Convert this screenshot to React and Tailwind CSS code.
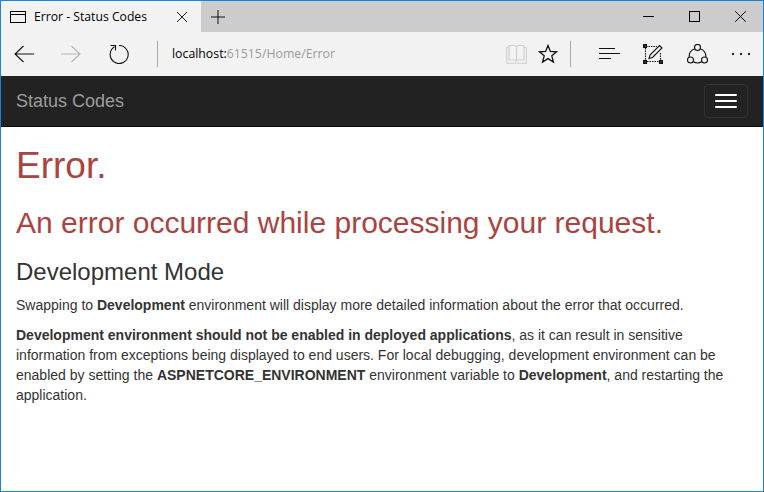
const ui = { fontFamily: '"Open Sans", "Noto Sans", sans-serif' };

function TitleBar() {
  return (
    <div className="flex h-[31px] bg-[#cccccc]">
      <div className="flex h-full w-[200px] items-center bg-[#f2f2f2] pl-[8px]">
        <svg width="18" height="14" viewBox="0 0 18 14" fill="none" stroke="#000" strokeWidth="1">
          <rect x="1.500" y="1.500" width="15" height="11" />
          <path d="M1.500 4.500h15" />
        </svg>
        <span className="mt-[2px] ml-[7px] w-[130px] text-[12.200px] whitespace-nowrap text-black" style={ui}>
          Error - Status Codes
        </span>
        <svg className="ml-[12px]" width="12" height="12" viewBox="0 0 12 12" fill="none" stroke="#222" strokeWidth="1">
          <path d="M1 1l10 10M11 1L1 11" />
        </svg>
      </div>
      <div className="flex w-[34px] items-center justify-center">
        <svg width="14" height="14" viewBox="0 0 14 14" fill="none" stroke="#111" strokeWidth="1">
          <path d="M7 0v14M0 7h14" />
        </svg>
      </div>
      <div className="flex-1" />
      <div className="flex h-full items-center">
        <div className="flex w-[46px] justify-center">
          <svg width="11" height="11" viewBox="0 0 11 11" stroke="#000"><path d="M0 5.500h11" /></svg>
        </div>
        <div className="flex w-[46px] justify-center">
          <svg width="11" height="11" viewBox="0 0 11 11" fill="none" stroke="#000"><rect x="0.500" y="0.500" width="10" height="10" /></svg>
        </div>
        <div className="flex w-[46px] justify-center">
          <svg width="11" height="11" viewBox="0 0 11 11" fill="none" stroke="#000"><path d="M0 0l11 11M11 0L0 11" /></svg>
        </div>
      </div>
    </div>
  );
}

function ToolBar() {
  return (
    <div className="flex h-[44px] items-center bg-[#f2f2f2]">
      <svg className="ml-[13px]" width="20" height="18" viewBox="0 0 20 18" fill="none" stroke="#111" strokeWidth="1.100">
        <path d="M20 9H1M9.500 1L1 9l8.500 8" />
      </svg>
      <svg className="ml-[27px]" width="20" height="18" viewBox="0 0 20 18" fill="none" stroke="#b4b4b4" strokeWidth="1.100">
        <path d="M0 9h19M10.500 1L19 9l-8.500 8" />
      </svg>
      <svg className="ml-[28px]" width="20" height="20" viewBox="0 0 20 20" fill="none" stroke="#111" strokeWidth="1.100">
        <path d="M5.500 2.800A9 9 0 1 0 10 1.500" />
        <path d="M1.500 1.500h5v5" />
      </svg>
      <div className="ml-[28px] h-[26px] w-px bg-[#a8a8a8]" />
      <div className="ml-[14px] text-[12.300px] whitespace-nowrap text-[#9a9a9a]" style={ui}>
        <span className="text-black">localhost:</span>61515/Home/Error
      </div>
      <div className="flex-1" />
      <svg width="21" height="20" viewBox="0 0 21 20" fill="none" stroke="#cfcfcf" strokeWidth="1.100">
        <path d="M3 1.500h5.500q2 0 2 2q0-2 2-2H18V16h-5.500q-2 0-2 1.500q0-1.500-2-1.500H3z" />
        <path d="M10.500 3.500v14M3 3.500H.700v15.800h19.600V3.500H18" />
      </svg>
      <svg className="ml-[11px]" width="20" height="20" viewBox="0 0 20 20" fill="none" stroke="#111" strokeWidth="1.300">
        <path d="M10 1.500l2.400 5.900 6.300.4-4.900 4 1.600 6.200L10 14.600 4.600 18l1.600-6.200-4.900-4 6.300-.4z" />
      </svg>
      <div className="ml-[12px] h-[26px] w-px bg-[#a8a8a8]" />
      <svg className="ml-[28px]" width="21" height="14" viewBox="0 0 21 14" stroke="#111" strokeWidth="1">
        <path d="M0 1.500h16M0 6.500h21M0 11.500h12" />
      </svg>
      <svg className="ml-[23px]" width="20" height="20" viewBox="0 0 20 20" fill="none" stroke="#111" strokeWidth="1.100">
        <path d="M3 2.500h11M2.500 4v12M17.500 9v7M4 17.500h12" strokeDasharray="1.500 1" />
        <rect x="0.500" y="0.500" width="3" height="3" fill="#333" />
        <rect x="0.500" y="16.500" width="3" height="3" fill="#333" />
        <rect x="16.500" y="16.500" width="3" height="3" fill="#333" />
        <path d="M6 14.500l1-3.500L16.500 1.500l2.500 2.500L9.500 13.500z" />
      </svg>
      <svg className="ml-[24px]" width="21" height="21" viewBox="0 0 21 21" fill="none" stroke="#111" strokeWidth="1.100">
        <circle cx="10.500" cy="3.500" r="3" />
        <circle cx="3.500" cy="16" r="3" />
        <circle cx="17.500" cy="16" r="3" />
        <path d="M7.700 4.800A8.500 8.500 0 0 0 2.100 13.300M13.300 4.800A8.500 8.500 0 0 1 18.900 13.300M6.300 17.800a8.500 8.500 0 0 0 8.400 0" />
      </svg>
      <div className="mr-[13px] ml-[24px] flex w-[18px] justify-between">
        <span className="h-[2px] w-[2px] bg-[#222]" />
        <span className="h-[2px] w-[2px] bg-[#222]" />
        <span className="h-[2px] w-[2px] bg-[#222]" />
      </div>
    </div>
  );
}

function NavBar() {
  return (
    <div className="flex h-[51px] items-center justify-between border-b border-[#080808] bg-[#222222] px-[15px]">
      <span className="text-[18px] text-[#9d9d9d]">Status Codes</span>
      <div className="flex h-[34px] w-[44px] flex-col items-center justify-center gap-[4px] rounded-[4px] border border-[#333333]">
        <span className="h-[2px] w-[22px] rounded-[1px] bg-white" />
        <span className="h-[2px] w-[22px] rounded-[1px] bg-white" />
        <span className="h-[2px] w-[22px] rounded-[1px] bg-white" />
      </div>
    </div>
  );
}

export default function App() {
  return (
    <div
      className="flex h-[492px] w-[764px] flex-col overflow-hidden border border-[#1883d7] bg-white"
      style={{ fontFamily: '"Liberation Sans", Arial, sans-serif' }}
    >
      <TitleBar />
      <ToolBar />
      <NavBar />
      <div className="px-[15px] text-[14px] leading-[20px] text-[#333333]">
        <h1 className="mt-[19px] mb-[10px] text-[37px] leading-[40px] text-[#a94442]">Error.</h1>
        <h2 className="mt-[20px] mb-[10px] text-[30px] leading-[33px] text-[#a94442]">
          An error occurred while processing your request.
        </h2>
        <h3 className="mt-[20px] mb-[10px] text-[24px] leading-[26px]">Development Mode</h3>
        <p className="mb-[10px]">
          Swapping to <strong>Development</strong> environment will display more detailed information about the error that occurred.
        </p>
        <p className="mb-[10px]">
          <strong>Development environment should not be enabled in deployed applications</strong>, as it can result in sensitive
          information from exceptions being displayed to end users. For local debugging, development environment can be
          enabled by setting the <strong>ASPNETCORE_ENVIRONMENT</strong> environment variable to <strong>Development</strong>, and
          restarting the application.
        </p>
      </div>
    </div>
  );
}
